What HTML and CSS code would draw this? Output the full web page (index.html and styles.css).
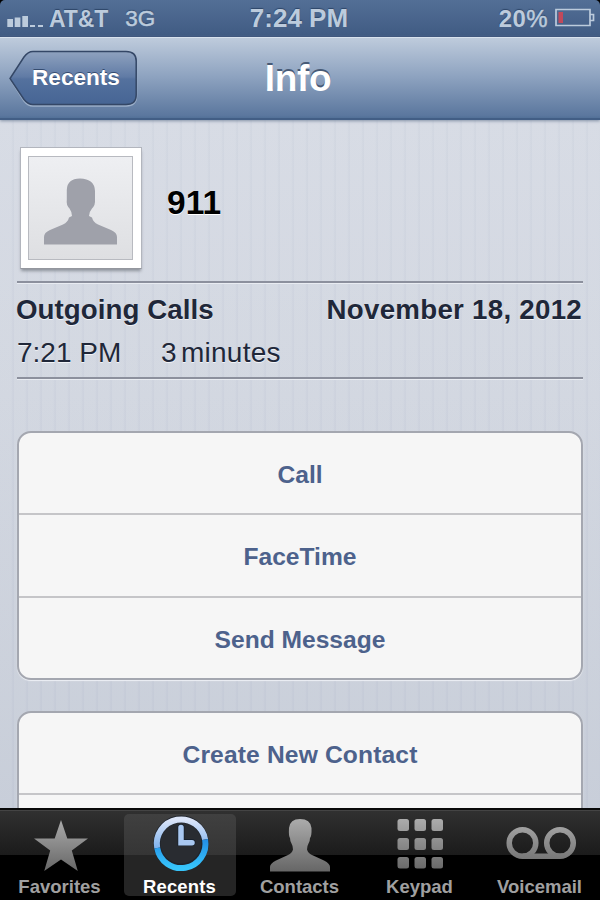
FILE: index.html
```html
<!DOCTYPE html>
<html lang="en">
<head>
<meta charset="utf-8">
<title>Info</title>
<link rel="stylesheet" href="styles.css">
</head>
<body>
<div class="phone">
  <header class="status">
    <div class="status-left">
      <svg class="signal" width="37" height="13" viewBox="0 0 37 13"><path d="M.3 4h5.700v8H.3zM7.700 2.500h5.700v9.500H7.700zM15.300 1H21v11h-5.700zM23 10h5v2h-5zM31 10h5v2h-5z" fill="#bccbdc"/></svg>
      <span class="carrier">AT&amp;T</span>
      <span class="network">3G</span>
    </div>
    <div class="clock">7:24 PM</div>
    <div class="status-right">
      <span class="percent">20<span class="sign">%</span></span>
      <svg class="battery" width="40" height="20" viewBox="0 0 40 20"><path d="M1 1.500h34v16H1zM35.500 6.500h3v6h-3" fill="none" stroke="#bccbdc" stroke-width="1.700"/><path d="M3.500 4H8v11H3.500z" fill="#c1495b"/></svg>
    </div>
  </header>

  <nav class="navbar">
    <div class="back">
      <svg class="back-shape" width="130" height="60" viewBox="0 0 130 60">
        <defs><linearGradient id="back-fill" x2="0" y2="1"><stop stop-color="#8fa2bf"/><stop offset=".48" stop-color="#607ba5"/><stop offset=".52" stop-color="#54719e"/><stop offset="1" stop-color="#466594"/></linearGradient></defs>
        <path d="M25 3H118Q128.500 3 128.500 13V46Q128.500 56 118 56H25Q20 56 16 51L2 29L16 9Q20 3 25 3Z" fill="none" stroke="#9db0c9" stroke-width="1.500"/>
        <path d="M25 1.500H118Q128.200 1.500 128.200 11V45Q128.200 54.500 118 54.500H25Q20 54.500 16 49.500L2 28.500L16 7Q20 1.500 25 1.500Z" fill="url(#back-fill)" stroke="#344766" stroke-width="1.500"/>
      </svg>
      <span class="back-label">Recents</span>
    </div>
    <h1 class="title">Info</h1>
  </nav>

  <main class="content">
    <section class="person">
      <div class="photo">
        <div class="photo-inner">
          <svg width="74" height="68" viewBox="0 0 74 68"><path d="M0 66.500V59Q0 54.500 6 52L19 46.500Q24 44 25 39.500L28 38Q28 34 25.500 30.500Q22 27 22.800 22V12Q23 .8 36 .5Q50.500 .8 51 13V22Q51.500 27 48 30.500Q45 34 45 38L48 39.500Q49 44 54 46.500L67 52Q73 54.500 73 59V66.500Z" fill="#9fa1aa"/></svg>
        </div>
      </div>
      <div class="name">911</div>
    </section>

    <section class="log">
      <div class="log-row heading"><span>Outgoing Calls</span><span class="date">November 18, 2012</span></div>
      <div class="log-row detail"><span class="time">7:21 PM</span><span class="count">3</span><span class="unit">minutes</span></div>
    </section>

    <section class="group first">
      <div class="cell">Call</div>
      <div class="cell">FaceTime</div>
      <div class="cell">Send Message</div>
    </section>
    <section class="group second">
      <div class="cell wide">Create New Contact</div>
      <div class="cell"></div>
    </section>
  </main>

  <footer class="tabs">
    <svg class="defs" width="0" height="0"><defs>
      <linearGradient id="gray" gradientUnits="userSpaceOnUse" x1="0" y1="4" x2="0" y2="60"><stop stop-color="#adadad"/><stop offset="1" stop-color="#636363"/></linearGradient>
      <linearGradient id="ring-top" x1="0" y1="0" x2="0" y2="1"><stop stop-color="#dce5f8"/><stop offset="1" stop-color="#7eb2ee"/></linearGradient>
      <linearGradient id="ring-bottom" x1="0" y1="0" x2="0" y2="1"><stop stop-color="#238ee7"/><stop offset="1" stop-color="#37c5fb"/></linearGradient>
    </defs></svg>
    <div class="tab">
      <svg class="icon" width="112" height="62" viewBox="0 0 112 62"><path d="M57 6L63.300 24.500H84L67.800 36.500L73.800 57L57 45.500L40.200 57L46.200 36.500L30 24.500H50.700Z" fill="url(#gray)"/></svg>
      <span>Favorites</span>
    </div>
    <div class="tab selected">
      <svg class="icon" width="112" height="62" viewBox="0 0 112 62">
        <circle cx="57" cy="29" r="24" fill="#292c31" stroke="#1f242c" stroke-width="7.200"/>
        <path d="M33.200 34A24.300 24.300 0 1 1 81.100 25.500" fill="none" stroke="url(#ring-top)" stroke-width="6"/>
        <path d="M33.200 34A24.300 24.300 0 0 0 81.100 25.500" fill="none" stroke="url(#ring-bottom)" stroke-width="6"/>
        <path d="M57 13.500V28.500H68" fill="none" stroke="#17202c" stroke-width="7" stroke-linecap="round"/>
        <path d="M57 13.500V28.800H68" fill="none" stroke="#a9c8f1" stroke-width="5.500" stroke-linecap="round"/>
      </svg>
      <span>Recents</span>
    </div>
    <div class="tab">
      <svg class="icon" width="112" height="62" viewBox="0 0 112 62"><path d="M26 57.500V53Q26 49.500 32 46.500L44 41Q48 39 49 35.500Q49 32 47.500 29.500Q46 27 46 24Q44.500 22 45 14Q46 5 56 5Q66.500 5 67.500 14Q67.800 22 66 24Q66 27 64.500 29.500Q63 32 63 35.500Q64 39 68 41L80 46.500Q86 49.500 86 53V57.500Z" fill="url(#gray)"/></svg>
      <span>Contacts</span>
    </div>
    <div class="tab">
      <svg class="icon" width="112" height="62" viewBox="0 0 112 62"><g fill="url(#gray)"><rect x="33.500" y="5" width="11.500" height="12" rx="2.500"/><rect x="50.500" y="5" width="11.500" height="12" rx="2.500"/><rect x="67.500" y="5" width="11.500" height="12" rx="2.500"/><rect x="33.500" y="24" width="11.500" height="12" rx="2.500"/><rect x="50.500" y="24" width="11.500" height="12" rx="2.500"/><rect x="67.500" y="24" width="11.500" height="12" rx="2.500"/><rect x="33.500" y="43" width="11.500" height="11.500" rx="2.500"/><rect x="50.500" y="43" width="11.500" height="11.500" rx="2.500"/><rect x="67.500" y="43" width="11.500" height="11.500" rx="2.500"/></g></svg>
      <span>Keypad</span>
    </div>
    <div class="tab">
      <svg class="icon" width="112" height="62" viewBox="0 0 112 62"><g fill="none" stroke="url(#gray)" stroke-width="5.500"><circle cx="38.500" cy="29" r="13.300"/><circle cx="76" cy="29" r="13.300"/><path d="M38.500 42.200H76.100V42.300"/></g></svg>
      <span>Voicemail</span>
    </div>
  </footer>
</div>
</body>
</html>
```
FILE: styles.css
```css
* { box-sizing: border-box; }
body {
  margin: 0;
  background: #000;
  font-family: "Liberation Sans", Arial, sans-serif;
  font-weight: bold;
}
.phone {
  width: 600px;
  height: 900px;
  display: flex;
  flex-direction: column;
  overflow: hidden;
}
svg { display: block; flex: none; }
span, .clock, .name, .cell { white-space: nowrap; }

.status {
  height: 37px;
  flex: none;
  display: grid;
  grid-template-columns: 1fr auto 1fr;
  grid-template-rows: 36px;
  align-items: center;
  padding: 0 5px 0 7px;
  border-radius: 5px 5px 0 0;
  background: linear-gradient(#536f96, #405b83);
  border-bottom: 1px solid #344e76;
  color: #bccbdc;
  text-shadow: 0 -1px 1px #2e4669;
}
.status-left, .status-right { display: flex; align-items: center; height: 36px; }
.status-right { justify-content: flex-end; }
.signal { margin-top: 6px; }
.carrier { margin-left: 5px; font-size: 23px; line-height: 36px; padding-top: 1px; letter-spacing: -0.1px; }
.network { margin-left: 17px; font-size: 22.5px; line-height: 36px; padding-top: 1px; font-weight: normal; -webkit-text-stroke: 0.5px #bccbdc; }
.clock { font-size: 26px; line-height: 36px; margin-right: 4px; }
.percent { font-size: 24px; line-height: 36px; margin-right: 7px; padding-top: 1px; letter-spacing: 0.4px; }
.sign { font-weight: normal; -webkit-text-stroke: 0.5px #bccbdc; }

.navbar {
  height: 83px;
  flex: none;
  display: grid;
  grid-template-columns: 1fr auto 1fr;
  align-items: start;
  padding: 12px 12px 0 8px;
  border-top: 1px solid #d8e2ee;
  border-bottom: 2px solid #425e85;
  background: linear-gradient(#becbdc, #8ea3c0 48%, #5b779e 97%, #527198);
  box-shadow: 0 1px 3px #8390a5;
  position: relative;
}
.back { display: grid; width: 130px; height: 60px; }
.back > * { grid-area: 1 / 1; }
.back-label {
  padding-left: 24px;
  line-height: 55px;
  font-size: 22.6px;
  color: #fff;
  text-shadow: 0 -1.5px 0 #354c70;
}
.title {
  margin: 0;
  font-size: 37px;
  line-height: 57px;
  letter-spacing: -0.3px;
  color: #fff;
  text-shadow: 0 -2px 0 #475a76;
}

.content {
  flex: 1;
  min-height: 0;
  overflow: hidden;
  padding: 27px 17px 0;
  background:
    repeating-linear-gradient(90deg, rgba(255,255,255,.04) 0 11px, rgba(115,125,165,.04) 13px 14px),
    linear-gradient(#d6dbe4, #d1d6e0 40%, #c6ccd8);
}
.person { display: flex; height: 134px; }
.photo {
  width: 122px;
  height: 122px;
  margin-left: 3px;
  padding: 8px 8px 8px 7px;
  background: #fff;
  border: 1px solid #b2b5bd;
  border-bottom-color: #94979e;
  box-shadow: 0 3px 3px -1px #8b9099;
}
.photo-inner {
  height: 104px;
  border: 1px solid #b8bac0;
  background: linear-gradient(#eeeff2, #dedfe2);
  display: flex;
  justify-content: center;
  padding-top: 21px;
}
.name {
  margin-left: 25px;
  line-height: 111px;
  font-size: 33.5px;
  color: #000;
  text-shadow: 0 1px 0 #fff;
}
.log {
  height: 98px;
  border-top: 2px solid #8c909d;
  border-bottom: 2px solid #8c909d;
  box-shadow: 0 1px 0 #e9ecf2, inset 0 1px 0 #e9ecf2;
  color: #202739;
  text-shadow: 0 1px 0 #f1f3f7;
}
.log-row { display: flex; }
.heading { justify-content: space-between; font-size: 27.7px; line-height: 54px; height: 49px; margin: 0 1px 0 -1px; letter-spacing: 0.05px; }
.date { letter-spacing: 0.27px; }
.detail { font-size: 28px; font-weight: normal; line-height: 41px; }
.time { width: 144px; }
.count { width: 20px; }
.unit { letter-spacing: 0.25px; }

.group {
  border: 2px solid #a4a7b0;
  border-radius: 14px;
  background: #f6f6f6;
  box-shadow: 0 1px 1px #eef0f5;
  color: #4d628c;
  font-size: 24.6px;
  text-align: center;
}
.group.first { margin-top: 52px; height: 249px; }
.group.second { margin-top: 31px; height: 249px; }
.cell { height: 82px; line-height: 84px; border-bottom: 2px solid #c5c5c8; }
.first .cell:nth-child(2) { height: 83px; }
.cell:last-child { border-bottom: 0; }
.wide { letter-spacing: 0.15px; }

.tabs {
  height: 92px;
  flex: none;
  display: grid;
  grid-template-columns: repeat(5, 112px);
  column-gap: 8px;
  padding: 6px 4px 0;
  background: linear-gradient(#090909 0 2px, #444 2px 3px, #303030 3px, #1b1b1b 47px, #000 47px);
  position: relative;
}
.defs { position: absolute; }
.tab { height: 82px; display: flex; flex-direction: column; align-items: center; color: #a0a0a0; font-size: 18.5px; line-height: 21px; }
.icon + span { margin: 0 1px 0 0; }
.selected { border-radius: 5px; color: #fff; background: linear-gradient(#404040, #353535 41px, #252525 41px); }
.selected .icon + span { letter-spacing: 0.15px; }
```
